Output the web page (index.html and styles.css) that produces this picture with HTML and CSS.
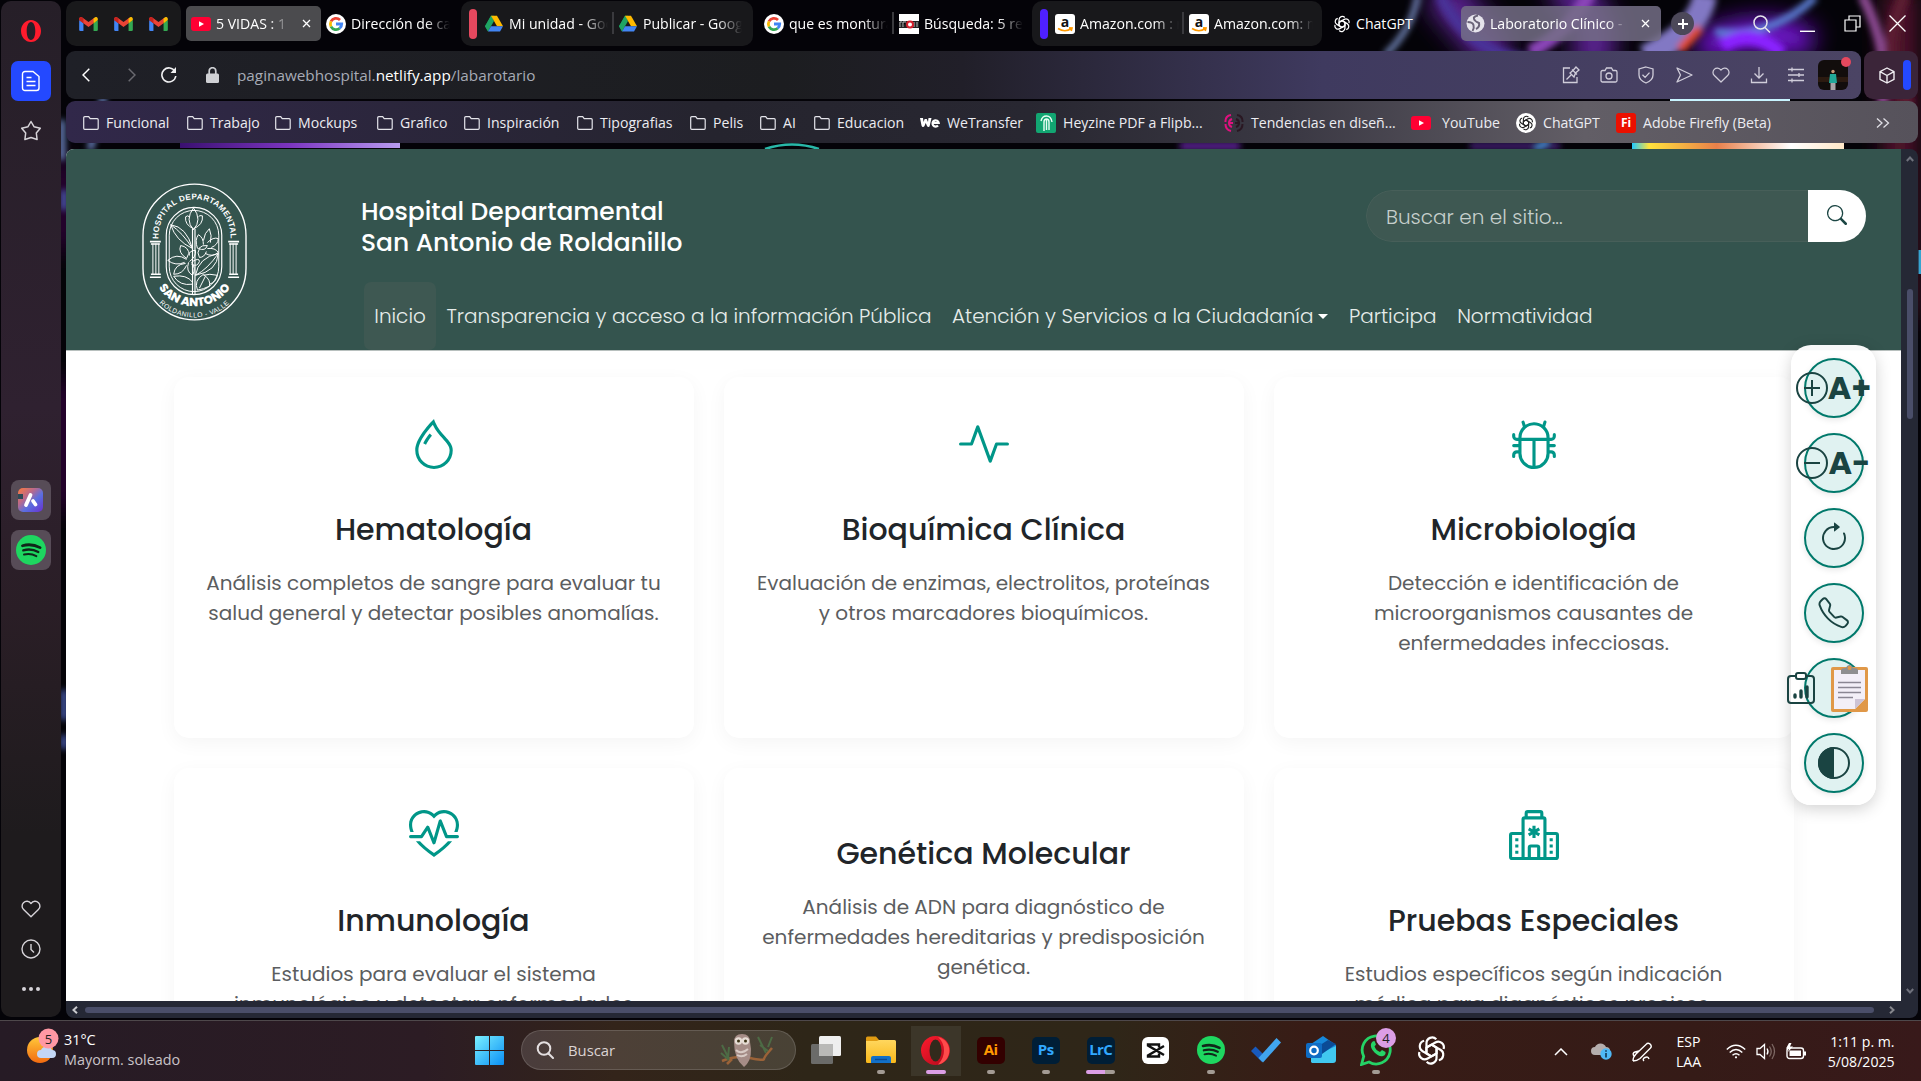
FILE: index.html
```
<!DOCTYPE html>
<html lang="es">
<head>
<meta charset="utf-8">
<title>Laboratorio Clínico</title>
<link rel="stylesheet" href="styles.css">
</head>
<body>
<svg class="defs" width="0" height="0">
  <defs>
    <linearGradient id="gSky" x1="0" y1="0" x2="1" y2="1"><stop offset="0" stop-color="#7af0ff"/><stop offset="1" stop-color="#0a8ff5"/></linearGradient>
    <linearGradient id="gSun" x1="0" y1="0" x2="0" y2="1"><stop offset="0" stop-color="#ffc83a"/><stop offset="1" stop-color="#f26a10"/></linearGradient>
    <linearGradient id="gOpera" x1="0" y1="0" x2="1" y2="1"><stop offset="0" stop-color="#ff1b2d"/><stop offset="1" stop-color="#b00a1c"/></linearGradient>
    <linearGradient id="gFolder" x1="0" y1="0" x2="0" y2="1"><stop offset="0" stop-color="#ffd75e"/><stop offset="1" stop-color="#f9b81a"/></linearGradient>
    <linearGradient id="gApp" x1="0" y1="0" x2="1" y2="1"><stop offset="0" stop-color="#ff7a3c"/><stop offset=".35" stop-color="#b96a8c"/><stop offset=".6" stop-color="#5a6fe0"/><stop offset="1" stop-color="#6a2fd0"/></linearGradient>
    <linearGradient id="gGlow" x1="0" y1="0" x2="1" y2="0"><stop offset="0" stop-color="#20c8ff"/><stop offset=".08" stop-color="#ffe23c"/><stop offset=".4" stop-color="#e8804a"/><stop offset=".75" stop-color="#fff"/><stop offset="1" stop-color="#ffe8c8"/></linearGradient>
    <linearGradient id="gViolet" x1="0" y1="0" x2="1" y2="0"><stop offset="0" stop-color="#3a1070"/><stop offset=".5" stop-color="#7c35c0"/><stop offset="1" stop-color="#b89cf0"/></linearGradient>
    <filter id="soft"><feGaussianBlur stdDeviation="3"/></filter>
    <filter id="haze" x="-50%" y="-50%" width="200%" height="200%"><feGaussianBlur stdDeviation="12"/></filter>
  </defs>
  <symbol id="gmail" viewBox="0 0 24 18"><path fill="#4285f4" d="M0 16.500V4l5.500 4v10H1.500A1.500 1.500 0 0 1 0 16.500"/><path fill="#34a853" d="M18.500 18V8L24 4v12.500a1.500 1.500 0 0 1-1.500 1.500"/><path fill="#ea4335" d="M0 4V2.500C0 .3 2.400-.8 4 .5l8 6 8-6-1.500 7.500L12 13 5.500 8z"/><path fill="#fbbc04" d="M18.500 2 20 .5c1.700-1.300 4-.2 4 2V4l-5.500 4.200z"/><path fill="#c5221f" d="M0 2.500C0 .3 2.400-.8 4 .5L5.500 2v6L0 4z"/></symbol>
  <symbol id="yt" viewBox="0 0 20 14"><rect width="20" height="14" rx="3" fill="#ff0033"/><path d="M8 4.200 13 7l-5 2.800z" fill="#fff"/></symbol>
  <symbol id="google" viewBox="0 0 20 20"><circle cx="10" cy="10" r="10" fill="#fff"/><g fill="none" stroke-width="2.800"><path stroke="#ea4335" d="M5 7.400A5.700 5.700 0 0 1 14 6"/><path stroke="#fbbc05" d="M5 12.600A5.700 5.700 0 0 1 5 7.400"/><path stroke="#34a853" d="M13.700 14.300A5.700 5.700 0 0 1 5 12.600"/><path stroke="#4285f4" d="M10 10h5.700a5.700 5.700 0 0 1-2 4.300"/></g></symbol>
  <symbol id="drive" viewBox="0 0 24 21"><path fill="#0f9d58" d="M8 0h4L4.200 21 0 14z"/><path fill="#1fa463" d="M8 0 0 14l4 7 8-14z"/><path fill="#ffba00" d="M8 0h8l8 14h-8z"/><path fill="#4285f4" d="M8 14h16l-4 7H4z"/></symbol>
  <symbol id="amazon" viewBox="0 0 20 20"><rect width="20" height="20" rx="3" fill="#fff"/><text x="10" y="12.500" text-anchor="middle" class="glyph-a">a</text><path d="M3 14.500q7 4.500 13.500 0M14 13.800l3 .2-.8 3" fill="none" stroke="#ff9900" stroke-width="1.700"/></symbol>
  <symbol id="openai" viewBox="0 0 24 24"><g fill="none" stroke="currentColor" stroke-width="1.700"><path id="k" d="M12 16.600 8.100 14.300V6.300a4.400 4.400 0 0 1 7.600-3"/><use href="#k" transform="rotate(60 12 12)"/><use href="#k" transform="rotate(120 12 12)"/><use href="#k" transform="rotate(180 12 12)"/><use href="#k" transform="rotate(240 12 12)"/><use href="#k" transform="rotate(300 12 12)"/></g></symbol>
  <symbol id="folder" viewBox="0 0 16 14"><path d="M.7 12.300V1.700a1 1 0 0 1 1-1h4l1.500 2h7a1 1 0 0 1 1 1v8.600a1 1 0 0 1-1 1h-12.500a1 1 0 0 1-1-1z" fill="none" stroke="#e4e4ea" stroke-width="1.200"/></symbol>
  <symbol id="spotify" viewBox="0 0 28 28"><circle cx="14" cy="14" r="14" fill="#1ed760"/><g fill="none" stroke="#10271a" stroke-linecap="round"><path stroke-width="2.600" d="M6 10q8.500-2.500 16.500 1.800"/><path stroke-width="2.200" d="M6.800 14.300q7.500-2 14 1.500"/><path stroke-width="1.900" d="M7.500 18.300q6-1.600 11.500 1.400"/></g></symbol>
  <symbol id="heart" viewBox="0 0 20 18"><path d="M10 16.800 2.600 9.600A4.800 4.800 0 0 1 2.500 2.700C4.600.6 8 .8 10 3.500c2-2.700 5.400-2.900 7.500-.8a4.800 4.800 0 0 1-.1 6.900z" fill="none" stroke="currentColor" stroke-width="1.400" stroke-linejoin="round"/></symbol>
  <symbol id="search" viewBox="0 0 16 16"><path d="M11.742 10.344a6.500 6.500 0 1 0-1.397 1.398h-.001q.044.06.098.115l3.850 3.850a1 1 0 0 0 1.415-1.414l-3.850-3.850a1 1 0 0 0-.115-.1zM12 6.500a5.500 5.500 0 1 1-11 0 5.500 5.500 0 0 1 11 0" fill="currentColor"/></symbol>
</svg>

<svg class="wallpaper" width="1921" height="1020" viewBox="0 0 1921 1020">
  <rect width="1921" height="1020" fill="#040308"/>
  <g filter="url(#haze)" fill="none">
    <path d="M1440-10 1500 60M1560-20q60 60 20 90" stroke="#5a2290" stroke-width="40"/>
    <path d="M1700 50q60-30 110-5" stroke="#7a18e0" stroke-width="30"/>
    <path d="M1900-10v330" stroke="#5c1230" stroke-width="30"/>
    <path d="M62 160v90M62 380v130" stroke="#4c0a5a" stroke-width="14"/>
  </g>
  <g filter="url(#soft)" fill="none">
    <path d="M1418-5Q1412 30 1385 55" stroke="#6d80b0" stroke-width="6"/>
    <path d="M1440-5q30 60 90 65" stroke="#4a3298" stroke-width="12"/>
    <path d="M1590-8q-20 40-60 60" stroke="#8a44b8" stroke-width="14"/>
    <path d="M1705-5q-5 35-60 62" stroke="#8278c4" stroke-width="24"/>
    <path d="M1715 32q60 5 100-35" stroke="#5a7cd0" stroke-width="8"/>
    <path d="M1680 50 1700 28" stroke="#e04a2c" stroke-width="9"/>
    <path d="M1722 46q30-20 60 8" stroke="#8a22ff" stroke-width="14"/>
    <path d="M1862-5q30 60 20 110" stroke="#8a4a90" stroke-width="10"/>
    <path d="M1905-5q-30 60 5 110" stroke="#5c1a30" stroke-width="12"/>
    <path d="M90 150 104 96M62 120v40" stroke="#7089c8" stroke-width="6"/>
    <path d="M1470 146h90" stroke="#3a1c68" stroke-width="8"/>
    <path d="M1536 150l12-10" stroke="#4a90d8" stroke-width="6"/>
    <path d="M1180 146h60" stroke="#5a2090" stroke-width="8"/>
    <path d="M64 190v20M64 690v30M64 735v14" stroke="#4e62b8" stroke-width="6"/>
  </g>
  <rect x="180" y="143" width="220" height="5" fill="url(#gViolet)"/>
  <rect x="1632" y="143" width="212" height="6" fill="url(#gGlow)"/>
  <rect x="1670" y="99" width="120" height="2" fill="#c8f4ff"/>
  <path d="M765 149q27-9 54 0" fill="none" stroke="#28b8a8" stroke-width="2.500"/>
  <path d="M1920 250v24" stroke="#36a4d0" stroke-width="3"/>
</svg>

<div class="screen">
  <div class="browser">
    <aside class="sidebar">
      <div class="side-top">
        <svg class="opera" width="20" height="22" viewBox="0 0 20 22"><path fill="#ff1b2d" fill-rule="evenodd" d="M10 0c5.800 0 10 5 10 11s-4.200 11-10 11S0 17 0 11 4.200 0 10 0m0 2C7.300 2 5.700 6 5.700 11s1.600 9 4.300 9 4.300-4 4.300-9S12.700 2 10 2"/></svg>
        <div class="side-active"><svg width="20" height="22" viewBox="0 0 20 22" fill="none" stroke="#fff" stroke-width="1.400"><path d="M4 1.500h8l6 5V18a2.500 2.500 0 0 1-2.500 2.500h-11A2.500 2.500 0 0 1 1.500 18V4A2.500 2.500 0 0 1 4 1.500zM5.500 7.500h5M5.500 11.500h9M5.500 15.500h9"/></svg></div>
        <svg width="22" height="22" viewBox="0 0 22 22" fill="none" stroke="#d6d3d8" stroke-width="1.500" stroke-linejoin="round"><path d="m11 1.500 3 5.200 6.300 1.500-4 4.800.8 6.500-6.100-2-6.100 2 .8-6.500-4-4.800L8 6.700z"/></svg>
      </div>
      <div class="side-apps">
        <div class="side-tile"><svg width="25" height="24" viewBox="0 0 25 24"><rect width="25" height="24" rx="5" fill="url(#gApp)"/><path d="M8 17 12.500 7M15 13l2.500 3.500" stroke="#fff" stroke-width="3.800" stroke-linecap="round"/><path d="M0 6h5v5H0z" fill="#2f4a56"/></svg></div>
        <div class="side-tile"><svg width="30" height="30"><use href="#spotify"/></svg></div>
      </div>
      <div class="side-bottom">
        <svg width="20" height="18"><use href="#heart"/></svg>
        <svg width="20" height="20" viewBox="0 0 20 20" fill="none" stroke="currentColor" stroke-width="1.400"><circle cx="10" cy="10" r="9"/><path d="M10 5v5.500l3 3"/></svg>
        <svg width="20" height="6" viewBox="0 0 20 6" fill="currentColor"><circle cx="3" cy="3" r="2"/><circle cx="10" cy="3" r="2"/><circle cx="17" cy="3" r="2"/></svg>
      </div>
    </aside>

    <main class="main">
      <div class="tabs">
        <div class="pinned"><svg width="19" height="14"><use href="#gmail"/></svg><svg width="19" height="14"><use href="#gmail"/></svg><svg width="19" height="14"><use href="#gmail"/></svg></div>
        <div class="tab tab-on tab-video"><svg width="20" height="14"><use href="#yt"/></svg><span class="fade">5 VIDAS : 1</span><svg class="x" width="9" height="9" viewBox="0 0 9 9"><path d="m1 1 7 7M8 1 1 8" stroke="#fff" stroke-width="1.300"/></svg></div>
        <div class="tab tab-free"><svg width="20" height="20"><use href="#google"/></svg><span class="fade">Dirección de calle</span></div>
        <div class="group group-drive">
          <i class="mark mark-red"></i>
          <div class="tab"><svg width="18" height="17"><use href="#drive"/></svg><span class="fade">Mi unidad - Google</span></div>
          <i class="sep"></i>
          <div class="tab"><svg width="18" height="17"><use href="#drive"/></svg><span class="fade">Publicar - Google</span></div>
        </div>
        <div class="loose">
          <div class="tab"><svg width="20" height="20"><use href="#google"/></svg><span class="fade">que es montura</span></div>
          <i class="sep"></i>
          <div class="tab"><svg width="20" height="20" viewBox="0 0 20 20"><path fill="#fff" d="M0 0h20v20H0z"/><path d="M0 7h20v7H0z" fill="#222"/><path d="M1 13V8h2M4 13V8h3M15 8v5M18 8v5" stroke="#bbb"/><circle cx="11" cy="10.500" r="3" fill="#fff" stroke="#d4202c" stroke-width="2"/></svg><span class="fade">Búsqueda: 5 res</span></div>
        </div>
        <div class="group group-shop">
          <i class="mark mark-violet"></i>
          <div class="tab"><svg width="20" height="20"><use href="#amazon"/></svg><span class="fade">Amazon.com : n</span></div>
          <i class="sep"></i>
          <div class="tab"><svg width="20" height="20"><use href="#amazon"/></svg><span class="fade">Amazon.com: m</span></div>
        </div>
        <div class="tab tab-chat"><svg width="18" height="18"><use href="#openai"/></svg><span>ChatGPT</span></div>
        <div class="tab tab-on tab-current"><svg width="19" height="19" viewBox="0 0 19 19"><circle cx="9.500" cy="9.500" r="9" fill="#e6e4ec"/><path d="M12 1.500Q7 2.500 8 5t5 4q1 4-3 6M1.500 8q5 0 6 3t-1 6" fill="none" stroke="#6b6479" stroke-width="2"/></svg><span class="fade">Laboratorio Clínico - H</span><svg class="x" width="9" height="9" viewBox="0 0 9 9"><path d="m1 1 7 7M8 1 1 8" stroke="#fff" stroke-width="1.300"/></svg></div>
        <div class="plus"><svg width="10" height="10" viewBox="0 0 10 10"><path d="M5 0v10M0 5h10" stroke="#fff" stroke-width="2"/></svg></div>
        <div class="window-controls">
          <svg width="18" height="18" viewBox="0 0 18 18" fill="none" stroke="#e6e6ec" stroke-width="1.500"><circle cx="7.500" cy="7.500" r="6.500"/><path d="m12 12.500 5 5"/></svg>
          <svg width="17" height="17" viewBox="0 0 17 17"><path d="M1 16.300h15" stroke="#fff" stroke-width="1.400"/></svg>
          <svg width="17" height="17" viewBox="0 0 17 17" fill="none" stroke="#fff" stroke-width="1.200"><path d="M1 5h11v11H1zM5 5V1h11v11h-4"/></svg>
          <svg width="17" height="17" viewBox="0 0 17 17"><path d="m.5.500 16 16M16.500.500l-16 16" stroke="#fff" stroke-width="1.300"/></svg>
        </div>
      </div>

      <div class="address-row">
        <div class="address">
          <svg class="back" width="8" height="14" viewBox="0 0 8 14"><path d="M7.300.7 1 7l6.300 6.300" fill="none" stroke="#fff" stroke-width="1.500"/></svg>
          <svg class="fwd" width="8" height="14" viewBox="0 0 8 14"><path d="M.7.700 7 7 .7 13.300" fill="none" stroke="#6a6a70" stroke-width="1.500"/></svg>
          <svg class="reload" width="16" height="16" viewBox="0 0 16 16"><path d="M14 4.500A7 7 0 1 0 14.800 9" fill="none" stroke="#f0f0f2" stroke-width="1.600"/><path d="M15 0v6H9.500z" fill="#f0f0f2"/></svg>
          <svg class="lock" width="13" height="16" viewBox="0 0 13 16"><path d="M3.200 7V4a3.300 3.300 0 0 1 6.600 0v3" fill="none" stroke="#cfd0d4" stroke-width="1.700"/><rect y="6.500" width="13" height="9.500" rx="1.500" fill="#cfd0d4"/></svg>
          <p class="url">paginawebhospital.<b>netlify.app</b>/labarotario</p>
          <div class="tools">
            <svg viewBox="0 0 18 18"><path d="M8 2H1.500v14.500H15V11M10 3.500l5 5M11 4.500l3-3.500 3 3-3.500 3-1.500 4-4-4zM9 9l-4.500 4.500"/></svg>
            <svg viewBox="0 0 18 18"><path d="M1 6a1.500 1.500 0 0 1 1.500-1.500H5L6.500 2h5L13 4.500h2.500A1.500 1.500 0 0 1 17 6v8.500a1.500 1.500 0 0 1-1.500 1.500h-13A1.500 1.500 0 0 1 1 14.500z"/><circle cx="9" cy="10" r="3"/></svg>
            <svg viewBox="0 0 18 18"><path d="m9 1 7 2v6c0 4-3.500 6.500-7 8-3.500-1.500-7-4-7-8V3zM5.500 8.800l2.600 2.600 4.400-4.800"/></svg>
            <svg viewBox="0 0 18 18"><path d="M2 2 17 9 2 16l3.500-7z" stroke-linejoin="round"/></svg>
            <svg viewBox="0 0 20 18"><use href="#heart"/></svg>
            <svg viewBox="0 0 18 18"><path d="M9 1v10.500M4.500 7.500 9 12l4.500-4.500M1.500 12.500v4h15v-4"/></svg>
            <svg viewBox="0 0 18 18"><path d="M1 3.500h16M1 9h16M1 14.500h16M5 1.500v4M12 7v4M5 12.500v4"/></svg>
          </div>
          <div class="avatar"><svg width="30" height="30" viewBox="0 0 30 30"><rect width="30" height="30" rx="6" fill="#120d0c"/><path d="M0 17h30v5H0z" fill="#2b1a10"/><circle cx="15" cy="11.500" r="1.700" fill="#c89878"/><path d="M12 14h6l1 9h-8z" fill="#22a898"/><path d="M12.500 23h5v7h-5z" fill="#aaa6a8"/></svg><i class="dot"></i></div>
        </div>
        <div class="island">
          <svg width="16" height="17" viewBox="0 0 16 17" fill="none" stroke="#f0eef2" stroke-width="1.400" stroke-linejoin="round"><path d="m8 1 7 3.600v7.800L8 16l-7-3.600V4.600zM1 4.600 8 8.500l7-3.900M8 8.500V16"/></svg><i class="bluebar"></i>
        </div>
      </div>

      <div class="bookmarks">
        <span><svg width="16" height="14"><use href="#folder"/></svg>Funcional</span>
        <span><svg width="16" height="14"><use href="#folder"/></svg>Trabajo</span>
        <span><svg width="16" height="14"><use href="#folder"/></svg>Mockups</span>
        <span><svg width="16" height="14"><use href="#folder"/></svg>Grafico</span>
        <span><svg width="16" height="14"><use href="#folder"/></svg>Inspiración</span>
        <span><svg width="16" height="14"><use href="#folder"/></svg>Tipografias</span>
        <span><svg width="16" height="14"><use href="#folder"/></svg>Pelis</span>
        <span><svg width="16" height="14"><use href="#folder"/></svg>AI</span>
        <span><svg width="16" height="14"><use href="#folder"/></svg>Educacion</span>
        <span><svg width="20" height="10" viewBox="0 0 20 10" fill="#fff"><path d="M0 0h3l.5 4L4.700 1h2L8 4 8.500 0h3L9.800 7.500Q9.500 9 8.500 9T7 8L5.700 5 4.500 8Q4 9 3 9T1.500 7.500z"/><path fill="none" stroke="#fff" stroke-width="2.200" d="M12.500 5h6.200A3.100 3.100 0 1 0 18 7.500"/></svg>WeTransfer</span>
        <span class="wide-gap"><svg width="20" height="20" viewBox="0 0 20 20"><rect width="20" height="20" rx="2" fill="#12a672"/><path d="M5 8q1-5 5.500-5T16 9M8 18V9q0-3 2.500-3T13 9v8M10.500 6v11" fill="none" stroke="#e8fff4" stroke-width="1.400"/></svg>Heyzine PDF a Flipb...</span>
        <span class="wide-gap"><svg width="20" height="20" viewBox="0 0 20 20" fill="none" stroke-width="2"><path stroke="#e0117f" d="M7 2Q1 3 1.500 9M1.500 11q0 6 5.500 7M8 6Q5 7 5 10t3 4M9 10H5"/><path stroke="#2a1722" d="M13 2q6 1 5.500 7M18.500 11q0 6-5.500 7M12 6q3 1 3 4t-3 4M11 10h4"/></svg>Tendencias en diseñ...</span>
        <span class="wide-gap yt-gap"><svg width="20" height="14"><use href="#yt"/></svg>YouTube</span>
        <span class="wide-gap"><svg width="20" height="20" viewBox="0 0 20 20"><circle cx="10" cy="10" r="10" fill="#fff"/><svg x="2" y="2" width="16" height="16" color="#222"><use href="#openai"/></svg></svg>ChatGPT</span>
        <span class="wide-gap"><svg width="20" height="20" viewBox="0 0 20 20"><rect width="20" height="20" rx="3" fill="#eb1000"/><text x="10" y="14" text-anchor="middle" class="glyph-fi">Fi</text></svg>Adobe Firefly (Beta)</span>
        <span><svg width="14" height="10" viewBox="0 0 14 10"><path d="m1 .5 5 4.500-5 4.500M7.500.5l5 4.500-5 4.500" fill="none" stroke="#e0dfe6" stroke-width="1.300"/></svg></span>
      </div>

      <div class="viewport">
        <div class="page">
          <header class="site-header">
            <svg class="crest" width="105" height="138" viewBox="0 0 106 139">
              <g fill="none" stroke="#fff">
                <rect x="1" y="1" width="104" height="137" rx="52" stroke-width="1.400"/>
                <rect x="24.500" y="24.500" width="56" height="88" rx="28" stroke-width="1.200"/>
                <rect x="27.500" y="27.500" width="50" height="82" rx="25"/>
                <path d="M51 46v66M53.500 46v66" stroke-width="1.200"/>
                <path d="M52 25q-9 12 0 22 9-10 0-22zM52 46q-9-4-8-12 M52 46q10-4 9-13M44 34q2-2 4 0M61 33q-3-1-4 1"/>
                <path d="M29 42q16 2 22 24Q34 58 29 42zM29 42q12 8 22 24M56 66q-3-9 1-14 5 3 5 10M62 58q1-8 6-12 3 7 1 14M66 60q6-6 11-4 0 6-7 9M66 66q8-1 11 4-6 5-13 1M58 66q-3 4 0 9 5 0 7-6M57 66q4-4 9-3-2 6-9 3z"/>
                <path d="M45 76q-9-6-6-13 8 1 9 10M45 76q3-9 9-8 1 6-6 11M45 77q-10-7-19 1 8 6 17 2M44 81q-11 1-12 11 9 0 13-9M47 80q-3 9 4 13 4-7-1-13M51 79q7-4 7 0-2 6-8 3"/>
                <path d="M54 93q3-18 23-22-1 18-23 22zM54 93q12-6 23-22M51 102Q38 104 32 94q13-2 19 6M56 108q-4-10 6-16 8 6 6 12-6 3-12 4zM58 106l6-12M68 102q7-2 8-9-8-2-14 0"/>
                <path d="M11 61v31M14 61v31M17 61v31M89 61v31M92 61v31M95 61v31"/>
                <path d="M8 59h11M9 61.500h9M9 92h10M8 95h11M87 59h11M88 61.500h9M88 92h9M87 95h11" stroke-width="1.600"/>
              </g>
              <path id="arcTop" d="M16.500 56C16.500 3 89.500 3 89.500 56" fill="none"/>
              <path id="arcName" d="M14.500 101C29 132 77 132 91.500 101" fill="none"/>
              <path id="arcCity" d="M11.500 113C29 143 77 143 94.500 113" fill="none"/>
              <g fill="#fff" text-anchor="middle">
                <text class="crest-top"><textPath href="#arcTop" startOffset="50%">HOSPITAL DEPARTAMENTAL</textPath></text>
                <text class="crest-name"><textPath href="#arcName" startOffset="50%">SAN ANTONIO</textPath></text>
                <text class="crest-city"><textPath href="#arcCity" startOffset="50%">ROLDANILLO - VALLE</textPath></text>
              </g>
            </svg>
            <div class="head-body">
              <div class="head-top">
                <h1>Hospital Departamental<br>San Antonio de Roldanillo</h1>
                <form class="site-search"><input type="text" placeholder="Buscar en el sitio..."><button type="button"><svg width="20" height="20"><use href="#search"/></svg></button></form>
              </div>
              <nav class="site-nav">
                <a class="on">Inicio</a><a>Transparencia y acceso a la información Pública</a><a>Atención y Servicios a la Ciudadanía<i class="caret"></i></a><a>Participa</a><a>Normatividad</a>
              </nav>
            </div>
          </header>
          <section class="cards">
            <article class="card"><div class="ico"><svg width="50" height="50" viewBox="0 0 16 16"><path d="M7.210.8C7.690.295 8 0 8 0q.164.544.371 1.038c.812 1.946 2.073 3.350 3.197 4.600C12.878 7.096 14 8.345 14 10a6 6 0 0 1-12 0C2 6.668 5.580 2.517 7.210.8m.413 1.021A31 31 0 0 0 5.794 3.990c-.726.950-1.436 2.008-1.960 3.070C3.304 8.133 3 9.138 3 10a5 5 0 0 0 10 0c0-1.201-.796-2.157-2.181-3.700l-.030-.032C9.750 5.110 8.500 3.720 7.623 1.820z"/><path d="M4.553 7.776c.820-1.641 1.717-2.753 2.093-3.130l.708.708c-.290.290-1.128 1.311-1.907 2.870z"/></svg></div><h3>Hematología</h3><p>Análisis completos de sangre para evaluar tu<br>salud general y detectar posibles anomalías.</p></article>
            <article class="card"><div class="ico"><svg width="50" height="50" viewBox="0 0 16 16"><path d="M6 2a.5.5 0 0 1 .47.33L10 12.036l1.530-4.208A.5.5 0 0 1 12 7.500h3.500a.5.5 0 0 1 0 1h-3.150l-1.880 5.170a.5.5 0 0 1-.94 0L6 3.964 4.470 8.171A.5.5 0 0 1 4 8.500H.5a.5.5 0 0 1 0-1h3.150l1.880-5.170A.5.5 0 0 1 6 2"/></svg></div><h3>Bioquímica Clínica</h3><p>Evaluación de enzimas, electrolitos, proteínas<br>y otros marcadores bioquímicos.</p></article>
            <article class="card"><div class="ico"><svg width="50" height="50" viewBox="0 0 16 16"><path d="M4.355.522a.5.5 0 0 1 .623.333l.291.956A5 5 0 0 1 8 1c1.007 0 1.946.298 2.731.811l.29-.956a.5.5 0 1 1 .957.29l-.41 1.352A5 5 0 0 1 13 6h.5a.5.5 0 0 0 .5-.5V5a.5.5 0 0 1 1 0v.5A1.500 1.500 0 0 1 13.500 7H13v1h1.500a.5.5 0 0 1 0 1H13v1h.5a1.500 1.500 0 0 1 1.500 1.500v.5a.5.5 0 1 1-1 0v-.5a.5.5 0 0 0-.5-.5H13a5 5 0 0 1-10 0h-.5a.5.5 0 0 0-.5.5v.5a.5.5 0 1 1-1 0v-.5A1.500 1.500 0 0 1 2.500 10H3V9H1.500a.5.5 0 0 1 0-1H3V7h-.5A1.500 1.500 0 0 1 1 5.500V5a.5.5 0 0 1 1 0v.5a.5.5 0 0 0 .5.5H3c0-1.364.547-2.601 1.432-3.503l-.41-1.352a.5.5 0 0 1 .333-.623M4 7v4a4 4 0 0 0 3.500 3.970V7zm4.500 0v7.970A4 4 0 0 0 12 11V7zM12 6a4 4 0 0 0-1.334-2.982A3.980 3.980 0 0 0 8 2a3.980 3.980 0 0 0-2.667 1.018A4 4 0 0 0 4 6z"/></svg></div><h3>Microbiología</h3><p>Detección e identificación de<br>microorganismos causantes de<br>enfermedades infecciosas.</p></article>
            <article class="card"><div class="ico"><svg width="50" height="50" viewBox="0 0 16 16"><path d="m8 2.748-.717-.737C5.600.281 2.514.878 1.400 3.053.918 3.995.780 5.323 1.508 7H.430c-2.128-5.697 4.165-8.830 7.394-5.857q.090.083.176.171a3 3 0 0 1 .176-.170c3.230-2.974 9.522.159 7.394 5.856h-1.078c.728-1.677.590-3.005.108-3.947C13.486.878 10.400.280 8.717 2.010zM2.212 10h1.315C4.593 11.183 6.050 12.458 8 13.795c1.949-1.337 3.407-2.612 4.473-3.795h1.315c-1.265 1.566-3.140 3.250-5.788 5-2.648-1.750-4.523-3.434-5.788-5"/><path d="M10.464 3.314a.5.5 0 0 0-.945.049L7.921 8.956 6.464 5.314a.5.5 0 0 0-.880-.091L3.732 8H.5a.5.5 0 0 0 0 1H4a.5.5 0 0 0 .416-.223l1.473-2.209 1.647 4.118a.5.5 0 0 0 .945-.049l1.598-5.593 1.457 3.642A.5.5 0 0 0 12 9h3.500a.5.5 0 0 0 0-1h-3.162z"/></svg></div><h3>Inmunología</h3><p>Estudios para evaluar el sistema<br>inmunológico y detectar enfermedades<br>autoinmunes.</p></article>
            <article class="card"><div class="ico ico-none"></div><h3>Genética Molecular</h3><p>Análisis de ADN para diagnóstico de<br>enfermedades hereditarias y predisposición<br>genética.</p></article>
            <article class="card"><div class="ico"><svg width="50" height="50" viewBox="0 0 16 16"><path d="M8.500 5.034v1.100l.953-.550.5.867L9 7l.953.550-.5.866-.953-.550v1.100h-1v-1.100l-.953.550-.5-.866L7 7l-.953-.550.5-.866.953.550v-1.100z"/><path d="M2 9h1v1H2zM2 11h1v1H2zM2 13h1v1H2zM13 9h1v1h-1zM13 11h1v1h-1zM13 13h1v1h-1z"/><path d="M5 1a1 1 0 0 1 1-1h4a1 1 0 0 1 1 1v1a1 1 0 0 1 1 1v4h3a1 1 0 0 1 1 1v7a1 1 0 0 1-1 1H1a1 1 0 0 1-1-1V8a1 1 0 0 1 1-1h3V3a1 1 0 0 1 1-1zm2 14h2v-3H7zm3 0h1V3H5v12h1v-3a1 1 0 0 1 1-1h2a1 1 0 0 1 1 1zm0-14H6v1h4zm2 7v7h3V8zm-8 7V8H1v7z"/></svg></div><h3>Pruebas Especiales</h3><p>Estudios específicos según indicación<br>médica para diagnósticos precisos.</p></article>
          </section>
          <div class="access">
            <div class="round"><svg width="32" height="32" viewBox="0 0 32 32" fill="none" stroke="currentColor" stroke-width="2"><circle cx="16" cy="16" r="15"/><path d="M16 8v16M8 16h16"/></svg>A+</div>
            <div class="round"><svg width="32" height="32" viewBox="0 0 32 32" fill="none" stroke="currentColor" stroke-width="2"><circle cx="16" cy="16" r="15"/><path d="M8 16h16"/></svg>A-</div>
            <div class="round"><svg width="32" height="32" viewBox="0 0 16 16" fill="currentColor"><path fill-rule="evenodd" d="M8 3a5 5 0 1 0 4.546 2.914.5.5 0 0 1 .908-.417A6 6 0 1 1 8 2z"/><path d="M8 4.466V.534a.25.25 0 0 1 .410-.192l2.360 1.966c.120.1.120.284 0 .384L8.410 4.658A.25.25 0 0 1 8 4.466"/></svg></div>
            <div class="round"><svg width="32" height="32" viewBox="0 0 16 16" fill="none" stroke="currentColor"><path d="M4.050 1.020a1.180 1.180 0 0 0-1.760-.110L1.250 1.950c-.620.620-.840 1.510-.570 2.290a18 18 0 0 0 4.290 6.790 18 18 0 0 0 6.790 4.290c.780.270 1.670.050 2.290-.570l.850-1.040a1.180 1.180 0 0 0-.110-1.760l-2.310-1.790a1.180 1.180 0 0 0-1.010-.210l-2.190.540a1.200 1.200 0 0 1-1.180-.320L5.840 7.710a1.200 1.200 0 0 1-.330-1.180l.550-2.190a1.180 1.180 0 0 0-.210-1.010z" transform="translate(.200 .100) scale(.970)"/></svg></div>
            <div class="round wide"><svg width="28" height="32" viewBox="0 0 28 32" fill="none" stroke="currentColor" stroke-width="2"><path d="M8 4H4a3 3 0 0 0-3 3v21a3 3 0 0 0 3 3h20a3 3 0 0 0 3-3V7a3 3 0 0 0-3-3h-4"/><rect x="9" y="1" width="10" height="6" rx="2"/><path stroke-width="3.400" stroke-linecap="round" d="M8 23v2M14 19v6M20 15v10"/></svg><svg width="37" height="47" viewBox="0 0 37 47"><rect y="2" width="37" height="45" rx="2" fill="#e09848"/><path d="M3 5h31v29L24 44H3z" fill="#f3eff8"/><path d="M34 34H24v10z" fill="#cdc3d6"/><path d="M10 9V5q0-2 5-2 1-3 3.500-3T22 3q5 0 5 2v4z" fill="#8e8e90"/><circle cx="18.500" cy="3" r="2" fill="#e09848"/><path d="M7 17.500h23M7 22.500h23M7 27.500h23M7 32.500h15" stroke="#8b8794" stroke-width="1.600"/></svg></div>
            <div class="round"><svg width="32" height="32" viewBox="0 0 32 32"><circle cx="16" cy="16" r="15" fill="none" stroke="currentColor" stroke-width="2"/><path d="M16 0a16 16 0 0 0 0 32z" fill="currentColor"/></svg></div>
          </div>
        </div>
        <div class="vbar"><svg width="8" height="6" viewBox="0 0 8 6"><path d="M.8 5 4 1.500 7.200 5" fill="none" stroke="#6f717c" stroke-width="2"/></svg><i></i><svg width="8" height="6" viewBox="0 0 8 6"><path d="M.8 1 4 4.500 7.200 1" fill="none" stroke="#6f717c" stroke-width="2"/></svg></div>
        <div class="hbar"><svg width="6" height="8" viewBox="0 0 6 8"><path d="M5 .8 1.500 4 5 7.200" fill="none" stroke="#c8c8cc" stroke-width="2"/></svg><i></i><svg width="6" height="8" viewBox="0 0 6 8"><path d="M1 .8 4.500 4 1 7.200" fill="none" stroke="#85868c" stroke-width="2"/></svg></div>
      </div>
    </main>
  </div>

  <footer class="taskbar">
    <div class="weather">
      <svg width="32" height="36" viewBox="0 0 32 36"><circle cx="13" cy="22" r="13" fill="url(#gSun)"/><path d="M14 30a4 4 0 0 1 0-8 6 6 0 0 1 11 0 4 4 0 0 1 0 8z" fill="#c3d6f6"/><circle cx="21.500" cy="10.500" r="10" fill="#ff98a4"/><text x="21.500" y="15.500" text-anchor="middle" class="badge-text">5</text></svg>
      <p><b>31°C</b><br>Mayorm. soleado</p>
    </div>
    <svg class="win" width="29" height="29" viewBox="0 0 29 29" fill="url(#gSky)"><path d="M0 1a1 1 0 0 1 1-1h13v14H0zM15 0h13a1 1 0 0 1 1 1v13H15zM0 15h14v14H1a1 1 0 0 1-1-1zM15 15h14v13a1 1 0 0 1-1 1H15z"/></svg>
    <div class="tb-search">
      <svg width="18" height="18" viewBox="0 0 18 18" fill="none" stroke="#e4dfe0" stroke-width="2"><circle cx="8" cy="7.500" r="6.300"/><path d="m12.500 12.500 4.500 4.500" stroke-linecap="round"/></svg>
      <span>Buscar</span>
      <svg class="owl" width="54" height="34" viewBox="0 0 54 34"><path d="M2 28q14-6 28-3t14 1 8-11M12 26l-5 5" fill="none" stroke="#9a6238" stroke-width="2.600"/><path d="M9 26 2 12M9 27 1 20M46 20 38 4M48 18 40 12M48 14l4-10M8 25l1-11" stroke="#4d6b45" stroke-width="2"/><path d="M14 9q0-8 8-8t8 8q3 14-3 22l-3 3q-10-8-10-25" fill="#a58c86"/><path d="M16 17q5 5 12-1M17 22q5 3 10-1" fill="none" stroke="#d8cac4" stroke-width="2"/><circle cx="18.500" cy="8" r="3.700" fill="#e6dcd4"/><circle cx="25.500" cy="8" r="3.700" fill="#e6dcd4"/><circle cx="18.500" cy="8" r="1.500" fill="#3c3216"/><circle cx="25.500" cy="8" r="1.500" fill="#3c3216"/></svg>
    </div>
    <div class="apps">
      <div class="app"><svg width="30" height="28" viewBox="0 0 30 28"><rect y="8" width="22" height="20" rx="1.500" fill="#6b6b69"/><rect x="8" width="22" height="20" rx="1.500" fill="#efefef"/><path d="M8 8h14v12H8z" fill="#b9b9b7"/></svg></div>
      <div class="app"><svg width="30" height="28" viewBox="0 0 30 28"><path d="M0 2a1.500 1.500 0 0 1 1.500-1.500H10L13 4H28v6H0z" fill="#e09b12"/><path d="M0 5h11l2-1h15.500A1.500 1.500 0 0 1 30 5.500v20a1.500 1.500 0 0 1-1.500 1.500h-27A1.500 1.500 0 0 1 0 25.500z" fill="url(#gFolder)"/><path d="M5 27v-5a2 2 0 0 1 2-2h16a2 2 0 0 1 2 2v5z" fill="#1270c8"/><path d="M9 23.500h12" stroke="#0a4a94" stroke-width="1.400"/></svg><i></i></div>
      <div class="app focused"><svg width="29" height="29" viewBox="0 0 29 29"><path fill="url(#gOpera)" d="M14.500 0a14.500 14.500 0 0 1 0 29 14.500 14.500 0 0 1 0-29"/><path fill="#ff4b4b" d="M17 1a14 14 0 0 1 0 27.500q6-6 6-14T17 1"/><ellipse cx="14.500" cy="14.500" rx="6" ry="11" fill="#322a1c"/></svg><i class="pill"></i></div>
      <div class="app"><b class="adobe ai">Ai</b><i></i></div>
      <div class="app"><b class="adobe ps">Ps</b><i></i></div>
      <div class="app"><b class="adobe lr">LrC</b><i class="pill long"></i></div>
      <div class="app"><svg width="27" height="27" viewBox="0 0 27 27"><rect width="27" height="27" rx="6" fill="#fff"/><path d="M22 9 6 18.500v1h11v-3M22 18 6 8.500v-1h11v3" fill="none" stroke="#111" stroke-width="2.400"/></svg></div>
      <div class="app"><svg width="28" height="28"><use href="#spotify"/></svg><i></i></div>
      <div class="app"><svg width="30" height="26" viewBox="0 0 30 26"><path d="m0 14 4.500-4.500 7.500 7.500-1 8z" fill="#185abd"/><path d="M7.500 21 25.500 1 30 5.500 12 25.500z" fill="#41a5ee"/></svg></div>
      <div class="app"><svg width="30" height="28" viewBox="0 0 30 28"><path d="m5 8 12-8 13 9v4L16 22z" fill="#1688da"/><path d="M5 26V12l12 4 13-6v14a3 3 0 0 1-3 3H6z" fill="#41c8f0"/><path d="m30 8-14 10-8-5 14-9z" fill="#0b4b96"/><rect y="7" width="16" height="15" rx="2" fill="#0f6cc4"/><circle cx="8" cy="14.500" r="3.800" fill="none" stroke="#fff" stroke-width="2.200"/></svg></div>
      <div class="app"><svg width="36" height="38" viewBox="0 0 36 38" class="wa"><path d="m1.500 36.500 2.200-8.200A14 14 0 1 1 9 34z" fill="none" stroke="#25d366" stroke-width="2.800"/><path d="M11 16q-1 4 3.500 8.500T23 28q3-1 2.500-4L22 22l-2 2q-4-1.500-5.500-5.500l1.500-2-1.500-3.500q-2.500 0-3.500 3" fill="#25d366"/><circle cx="26" cy="10" r="10" fill="#dc9ee6"/><text x="26" y="15" text-anchor="middle" class="badge-text">4</text></svg><i></i></div>
      <div class="app"><svg width="31" height="31" color="#fff"><use href="#openai"/></svg></div>
    </div>
    <div class="tray">
      <svg width="14" height="8" viewBox="0 0 14 8"><path d="m1 7 6-6 6 6" fill="none" stroke="#fff" stroke-width="1.500"/></svg>
      <svg class="t-cloud" width="21" height="17" viewBox="0 0 21 17"><path d="M4 12a4 4 0 0 1 0-8 6 6 0 0 1 11 0 4 4 0 0 1 0 8z" fill="#b5aead"/><circle cx="15" cy="11" r="5.700" fill="#4fb8f5"/><path d="M15 7.300v1.500M15 10v4.500" stroke="#0d2c48" stroke-width="1.500"/></svg>
      <svg class="t-pen" width="20" height="20" viewBox="0 0 20 20" fill="none" stroke="#fff" stroke-width="1.400"><path d="M1 19q0-4 3-7L15 1.500q2-1 3.500 1t0 3.500L8 16.500Q5 19 1 19M2 14q-2-3 1-4l4-1M12 19q-2-2 1-3.500t4 1.500"/></svg>
      <p class="t-lang">ESP<br>LAA</p>
      <svg class="t-wifi" width="20" height="15" viewBox="0 0 20 15" fill="none" stroke="#fff" stroke-width="1.500"><path d="M.8 5.500q9-8.500 18.400 0M3.700 8.500q6.300-6 12.600 0M6.500 11.300q3.500-3 7 0"/><circle cx="10" cy="13.300" r="1.100" fill="#fff" stroke="none"/></svg>
      <svg class="t-vol" width="20" height="17" viewBox="0 0 20 17" fill="none" stroke="#fff" stroke-width="1.300"><path d="M1 5.500v6h3l4.500 4V1.500L4 5.500zM11 5.500q2 3 0 6"/><path d="M13.500 3.500q3.500 5 0 10M16 1q5 7.500 0 15" stroke="#7d6863"/></svg>
      <svg class="t-bat" width="21" height="17" viewBox="0 0 21 17"><rect x="1" y="5" width="16.500" height="10.500" rx="2.500" fill="none" stroke="#fff" stroke-width="1.400"/><rect x="3.500" y="7.500" width="11.500" height="5.500" fill="#fff"/><path d="M19 8.500v4" stroke="#fff" stroke-width="2"/><path d="M3 0 0 5.500h3L2 9l5-5.500H4L5.500 0z" fill="#fff"/></svg>
      <p class="t-time">1:11 p. m.<br>5/08/2025</p>
    </div>
  </footer>
</div>
</body>
</html>
```
FILE: styles.css
```
* { box-sizing: border-box; margin: 0; }
html, body { height: 100%; overflow: hidden; }
body { background: #040308; font-family: "Open Sans", "Noto Sans", sans-serif; font-size: 14.1px; color: #fff; }
svg { flex: none; display: block; }
.defs, .wallpaper { position: absolute; left: 0; top: 0; }
.screen { position: relative; width: 1921px; height: 1081px; display: flex; flex-direction: column; }
.browser { height: 1020px; display: flex; }

/* Sidebar */
.sidebar { width: 60px; height: 1016px; margin: 1px 5px 0 1px; padding-right: 1px; border-radius: 10px; background: linear-gradient(#261f28, #2f2130 40%, #2a1e26 60%, #1e1b1d 82%); display: flex; flex-direction: column; align-items: center; color: #d6d3d8; }
.side-top { display: flex; flex-direction: column; align-items: center; padding-top: 19px; height: 479px; }
.side-active { width: 40px; height: 40px; margin: 19px 0 19px; border-radius: 7px; background: #2449ff; display: grid; place-items: center; }
.side-apps { display: flex; flex-direction: column; gap: 10px; height: 420px; }
.side-tile { width: 40px; height: 40px; border-radius: 8px; background: #574c57; display: grid; place-items: center; }
.side-bottom { display: flex; flex-direction: column; align-items: center; gap: 21px; }
.side-bottom svg:last-child { margin-top: 6px; }

/* Tab strip */
.main { width: 1855px; display: flex; flex-direction: column; }
.tabs { height: 51px; padding-top: 1px; display: flex; align-items: flex-start; }
.pinned { width: 115px; height: 45px; padding-left: 13px; border-radius: 10px; background: #19191b; display: flex; align-items: center; gap: 16px; }
.tab { height: 35px; margin-top: 5px; display: flex; align-items: center; gap: 5px; white-space: nowrap; overflow: hidden; }
.fade { flex: none; width: 99px; overflow: hidden; -webkit-mask-image: linear-gradient(90deg, #000 75%, transparent); mask-image: linear-gradient(90deg, #000 75%, transparent); }
.tab-on { border-radius: 5px; padding: 0 5px; }
.tab-video { width: 135px; margin-left: 5px; background: #4b4b4e; }
.tab-video .fade { width: 73px; }
.x { margin-left: 8px; }
.tab-free { margin-left: 5px; width: 130px; }
.group { height: 45px; border-radius: 10px; background: #18181b; display: flex; }
.group-drive { width: 292px; margin-left: 5px; padding-left: 8px; }
.group-drive .tab { width: 124px; gap: 6px; }
.mark { width: 8px; height: 30px; border-radius: 4px; margin: 8px 8px 0 0; }
.mark-red { background: #e5485e; }
.mark-violet { background: #4f20ff; }
.sep { width: 2px; height: 22px; margin: 11px 5px 0 3px; background: #3a3a3e; }
.loose { display: flex; padding-left: 11px; width: 279px; }
.loose .tab { width: 125px; }
.group-shop .tab { width: 124px; }
.group-shop { width: 290px; padding-left: 8px; }
.group-shop .mark { margin-right: 7px; }
.tab-chat { width: 128px; margin-left: 11px; }
.tab-current { width: 200px; background: rgba(116, 110, 134, .85); }
.tab-current .fade { width: 137px; }
.tab-current .x { margin-left: 9px; }
.tab-current .fade { -webkit-mask-image: linear-gradient(90deg, #000 85%, transparent); mask-image: linear-gradient(90deg, #000 85%, transparent); }
.plus { width: 23px; height: 23px; margin: 11px 59px 0 10px; border-radius: 50%; background: #4c4859; display: grid; place-items: center; }
.window-controls { display: flex; gap: 28px; padding-top: 14px; }
.glyph-a { font: 700 14px "Open Sans", sans-serif; fill: #111; }
.glyph-fi { font: 700 12px "Open Sans", sans-serif; fill: #fff; }

/* Address row */
.address-row { height: 48px; display: flex; gap: 3px; margin-bottom: 2px; }
.address { width: 1795px; padding-left: 16px; border-radius: 9px; background: linear-gradient(90deg, #1f2027, #1c1d20 40%, #211f29 50%, #3f3a5f 70%, #4b4464); display: flex; align-items: center; }
.fwd { margin-left: 38px; }
.reload { margin-left: 25px; }
.lock { margin: 0 17px 0 29px; }
.url { font-size: 15.3px; color: #a7abb6; width: 1315px; margin-left: 1px; }
.url b { font-weight: 400; color: #fff; }
.tools { display: flex; gap: 19.5px; margin-left: 10px; }
.tools svg { width: 18px; height: 18px; fill: none; stroke: #d0cdda; stroke-width: 1.3; color: #d0cdda; }
.avatar { position: relative; margin-left: 13px; }
.dot { position: absolute; right: -3px; top: -3px; width: 10px; height: 10px; border-radius: 50%; background: #e5485e; }
.island { width: 54px; border-radius: 9px; background: #3b2539; display: flex; align-items: center; padding-left: 15px; gap: 8px; }
.bluebar { width: 8px; height: 30px; border-radius: 4px; background: #2449ff; }

/* Bookmarks */
.bookmarks { width: 1852px; height: 42px; margin-bottom: 6px; padding: 1px 0 0 17px; border-radius: 9px; background: linear-gradient(90deg, #31284a, #25242e 35%, #282731 52%, #3a3843 66%, #625e66 82%, #56525b); display: grid; grid-template-columns: 104px 88px 102px 87px 113px 113px 70px 54px 106px 116px 188px 187px 105px 100px 260px 20px; align-items: center; }
.bookmarks span { display: flex; align-items: center; gap: 7px; white-space: nowrap; color: #ececf1; }
.bookmarks .wide-gap { gap: 7px; }
.bookmarks .yt-gap { gap: 11px; }

/* Viewport and scrollbars */
.viewport { width: 1852px; height: 869px; display: grid; grid-template: 852px 17px / 1835px 17px; border-radius: 8px; overflow: hidden; background: #252835; }
.page { position: relative; overflow: hidden; background: #fff; font-family: Poppins, Inter, sans-serif; }
.vbar { display: flex; flex-direction: column; align-items: center; padding: 7px 0; }
.vbar i { width: 6px; height: 130px; margin: 127px 0 auto; border-radius: 3px; background: #4a4e69; }
.hbar { display: flex; align-items: center; gap: 7px; padding-left: 6px; }
.hbar i { width: 1789px; height: 6px; border-radius: 3px; background: #4a4e69; }
.hbar svg:last-child { margin-left: 8px; }

/* Hospital header */
.site-header { height: 202px; background: #34544e; border-bottom: 1px solid #b8c0be; display: flex; padding: 34px 35px 0 76px; }
.head-body { margin-left: 114px; flex: 1; }
.head-top { display: flex; justify-content: space-between; height: 99px; padding-top: 7px; }
h1 { font-size: 24.960px; font-weight: 500; line-height: 31px; padding-top: 6px; }
.site-search { display: flex; height: 52px; width: 500px; border-radius: 26px; overflow: hidden; }
.site-search input { width: 442px; border: 1px solid #475f59; border-right: 0; border-radius: 26px 0 0 26px; background: #3e5852; padding: 2px 19px 0; font: 300 20px Poppins, Inter, sans-serif; color: #fff; }
.site-search input::placeholder { color: #c6cfcc; opacity: 1; }
.site-search button { width: 58px; border: 0; background: #fff; color: #1c4644; padding: 0 0 3px; display: grid; place-items: center; }
.site-nav { display: flex; height: 68px; margin-left: 3px; font-size: 20px; font-weight: 300; white-space: nowrap; }
.site-nav a { display: flex; align-items: center; padding: 0 10.300px; color: #e6ecea; }
.site-nav .on { background: #3e5852; border-radius: 7px; }
.caret { border: 5.500px solid transparent; border-top-color: #fff; border-bottom: 0; margin-left: 5px; }
.crest-top { font: 700 8.200px "Liberation Sans", sans-serif; letter-spacing: .3px; }
.crest-name { font: 800 12px Poppins, sans-serif; }
.crest-city { font: 500 6.800px "Liberation Sans", sans-serif; letter-spacing: .5px; }

/* Service cards */
.cards { display: grid; grid-template-columns: repeat(3, 520px); grid-template-rows: 361px 361px; gap: 30px; padding: 26px 0 0 107.5px; }
.card { border-radius: 15px; background: #fff; box-shadow: 0 5px 20px rgba(0, 0, 0, .045); text-align: center; padding-top: 42px; }
.ico { height: 93px; fill: #009688; }
.ico svg { margin: 0 auto; }
.ico-none { height: 26px; }
h3 { font-size: 30px; font-weight: 500; line-height: 36px; color: #212529; }
.card p { margin-top: 20px; font-size: 20px; line-height: 30px; color: #5b5d60; }

/* Floating accessibility tools */
.access { position: absolute; left: 1725px; top: 196px; width: 85px; height: 460px; padding: 13px 12px; border-radius: 20px; background: rgba(255, 255, 255, .96); box-shadow: 0 4px 16px rgba(0, 0, 0, .18); display: flex; flex-direction: column; align-items: center; gap: 15px; }
.round { flex: none; width: 60px; height: 60px; border: 2px solid #00796b; border-radius: 50%; background: #e0f2f1; color: #1a4442; display: flex; align-items: center; justify-content: center; font-size: 32px; font-weight: 700; box-shadow: 0 2px 6px rgba(0, 0, 0, .1); }
.wide { gap: 16px; padding-right: 13px; }

/* Taskbar */
.taskbar { height: 61px; border-top: 1px solid #4e484b; background: linear-gradient(90deg, #261b25, #2c1c24 22%, #33241a 32%, #2e2618 42%, #2f2618 58%, #381c16 68%, #351b17 88%, #38191a); display: flex; align-items: flex-start; }
.weather { display: flex; align-items: flex-start; width: 475px; padding: 7px 0 0 27px; gap: 5px; font-size: 14.4px; line-height: 20px; color: #c9c3c8; }
.weather p { padding-top: 2px; }
.weather b { font-weight: 400; color: #fff; }
.badge-text { font: 13px "Open Sans", sans-serif; fill: #222; }
.win { margin-top: 15px; }
.tb-search { width: 275px; height: 40px; margin: 9px 2px 0 17px; padding: 0 4px 0 14px; border-radius: 20px; border: 1px solid rgba(255, 255, 255, .14); background: rgba(255, 255, 255, .13); display: flex; align-items: center; gap: 14px; color: #dcd4d4; }
.tb-search span { width: 138px; font-size: 14.8px; }
.apps { display: flex; }
.app { width: 55.050px; height: 60px; display: grid; place-items: center; grid-template: 58px / 1fr; }
.app > * { grid-area: 1 / 1; }
.app i { align-self: end; width: 8px; height: 4px; border-radius: 2px; background: #a39b94; margin-bottom: 5px; }
.app .pill { width: 20px; background: #dc9ee6; }
.app .long { width: 29px; background: linear-gradient(90deg, #dc9ee6 66%, #a39b94 66%); }
.focused { background: linear-gradient(#3c3629, #3c3629) center 5px / 50px 50px no-repeat; }
.adobe { width: 28px; height: 27px; border-radius: 5px; font-size: 15px; line-height: 25px; text-align: center; letter-spacing: -.6px; }
.ai { background: #330000; color: #ff9a00; }
.ps { background: #001e36; color: #31a8ff; }
.lr { background: #001e36; color: #31a8ff; }
.wa { margin: -7px 0 0 5px; }
.tray { display: flex; align-items: center; height: 61px; margin-left: 95px; line-height: 20px; text-align: center; }
.t-cloud { margin-left: 23px; }
.t-pen { margin-left: 20px; }
.t-lang { margin-left: 22px; width: 30px; }
.t-wifi { margin-left: 22px; }
.t-vol { margin-left: 10px; }
.t-bat { margin-left: 10px; }
.t-time { width: 80px; margin-left: 8px; text-align: right; white-space: nowrap; }
```
